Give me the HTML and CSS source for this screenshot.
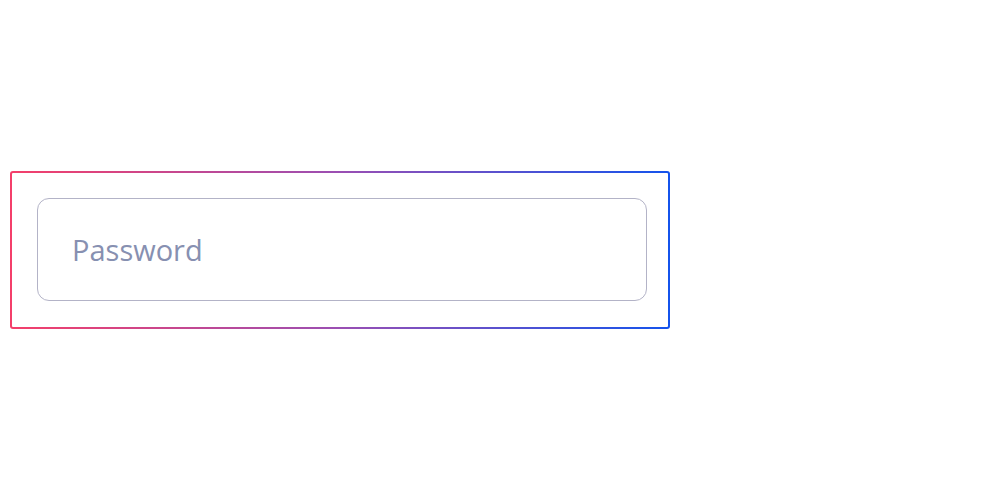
FILE: index.html
```html
<!DOCTYPE html>
<html>
<head>
<meta charset="utf-8">
<link rel="stylesheet" href="styles.css">
</head>
<body>
<div class="page">
  <div class="frame">
    <div class="field">Password</div>
  </div>
</div>
</body>
</html>
```

FILE: styles.css
```css
html, body {
  margin: 0;
  padding: 0;
  background: #ffffff;
}
.page {
  padding: 171px 0 0 10px;
}
.frame {
  width: 631px;
  height: 129px;
  border: 2px solid transparent;
  border-radius: 3px;
  background: linear-gradient(#ffffff, #ffffff) padding-box,
              linear-gradient(90deg, #f43f6a 0%, #9a4fb3 50%, #1453ec 100%) border-box;
  padding: 25px 0 0 25px;
  box-sizing: content-box;
  display: flex;
  align-items: flex-start;
}
.field {
  width: 574px;
  height: 101px;
  border: 1px solid #b3b3c7;
  border-radius: 12px;
  padding-left: 34px;
  display: flex;
  align-items: center;
  font-family: "Open Sans", sans-serif;
  font-size: 29px;
  color: #8790b1;
}
```
